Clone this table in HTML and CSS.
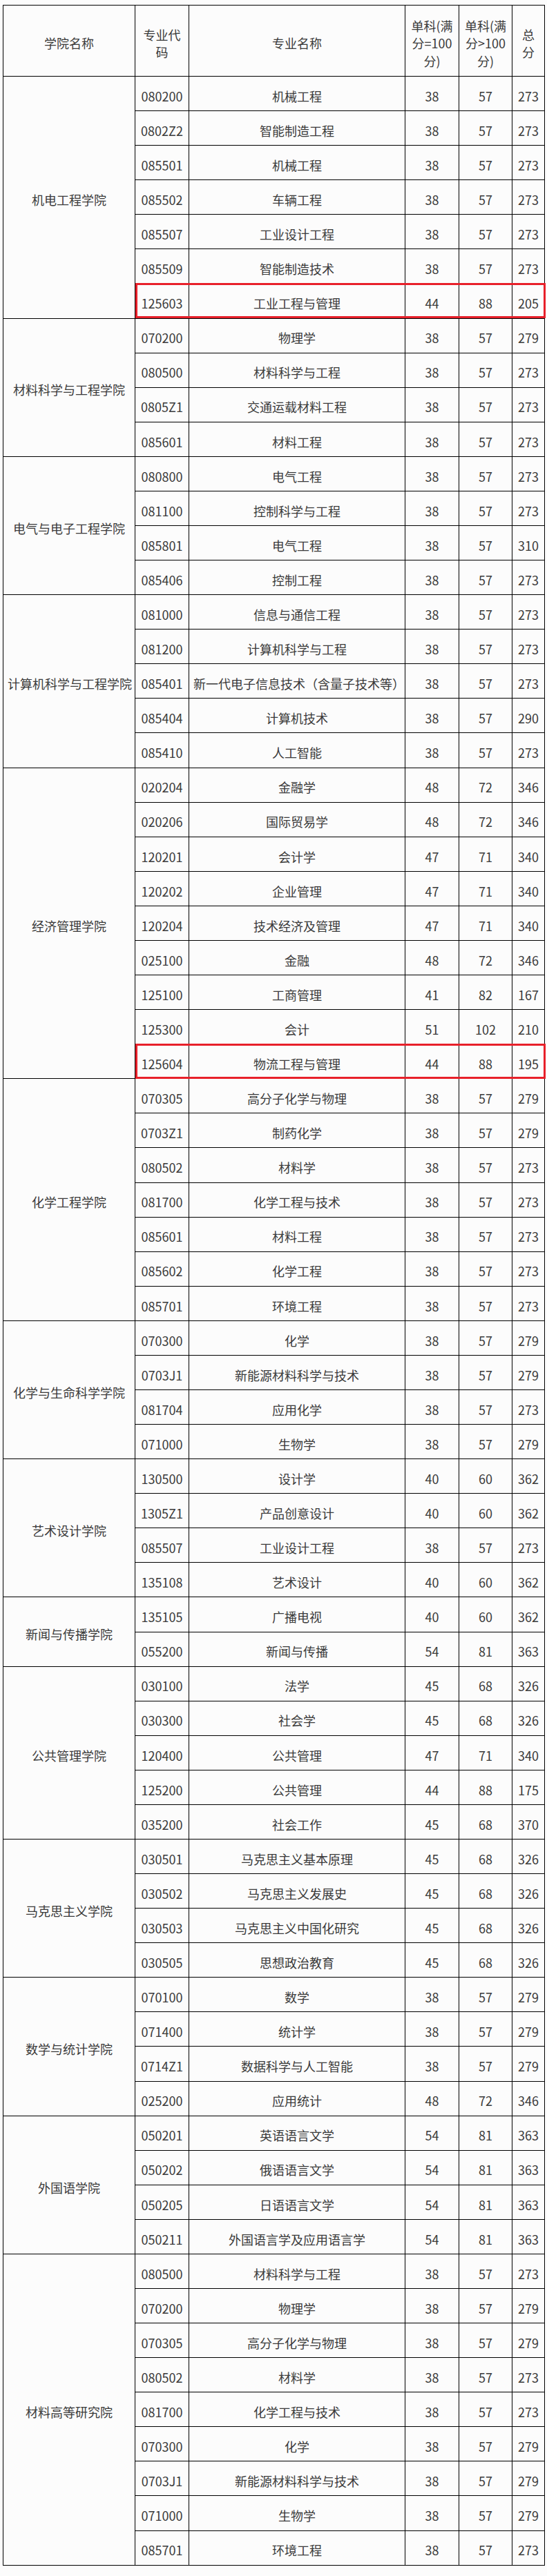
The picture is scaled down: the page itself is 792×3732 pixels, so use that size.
FILE: index.html
```html
<!DOCTYPE html>
<html lang="zh-CN">
<head>
<meta charset="utf-8">
<title>分数线</title>
<link rel="stylesheet" href="styles.css">
</head>
<body>
<div class="page">
<table class="score">
<colgroup>
<col class="c-school"><col class="c-code"><col class="c-name"><col class="c-s1"><col class="c-s2"><col class="c-total">
</colgroup>
<thead>
<tr class="head"><th>学院名称</th><th>专业代码</th><th>专业名称</th><th>单科(满分=100分)</th><th>单科(满分&gt;100分)</th><th>总分</th></tr>
</thead>
<tbody>
<tr><td class="school" rowspan="7">机电工程学院</td><td>080200</td><td>机械工程</td><td>38</td><td>57</td><td>273</td></tr>
<tr><td>0802Z2</td><td>智能制造工程</td><td>38</td><td>57</td><td>273</td></tr>
<tr><td>085501</td><td>机械工程</td><td>38</td><td>57</td><td>273</td></tr>
<tr><td>085502</td><td>车辆工程</td><td>38</td><td>57</td><td>273</td></tr>
<tr><td>085507</td><td>工业设计工程</td><td>38</td><td>57</td><td>273</td></tr>
<tr><td>085509</td><td>智能制造技术</td><td>38</td><td>57</td><td>273</td></tr>
<tr><td class="hl">125603<span class="hl-box"></span></td><td>工业工程与管理</td><td>44</td><td>88</td><td>205</td></tr>

<tr><td class="school" rowspan="4">材料科学与工程学院</td><td>070200</td><td>物理学</td><td>38</td><td>57</td><td>279</td></tr>
<tr><td>080500</td><td>材料科学与工程</td><td>38</td><td>57</td><td>273</td></tr>
<tr><td>0805Z1</td><td>交通运载材料工程</td><td>38</td><td>57</td><td>273</td></tr>
<tr><td>085601</td><td>材料工程</td><td>38</td><td>57</td><td>273</td></tr>

<tr><td class="school" rowspan="4">电气与电子工程学院</td><td>080800</td><td>电气工程</td><td>38</td><td>57</td><td>273</td></tr>
<tr><td>081100</td><td>控制科学与工程</td><td>38</td><td>57</td><td>273</td></tr>
<tr><td>085801</td><td>电气工程</td><td>38</td><td>57</td><td>310</td></tr>
<tr><td>085406</td><td>控制工程</td><td>38</td><td>57</td><td>273</td></tr>

<tr><td class="school" rowspan="5">计算机科学与工程学院</td><td>081000</td><td>信息与通信工程</td><td>38</td><td>57</td><td>273</td></tr>
<tr><td>081200</td><td>计算机科学与工程</td><td>38</td><td>57</td><td>273</td></tr>
<tr><td>085401</td><td>新一代电子信息技术（含量子技术等）</td><td>38</td><td>57</td><td>273</td></tr>
<tr><td>085404</td><td>计算机技术</td><td>38</td><td>57</td><td>290</td></tr>
<tr><td>085410</td><td>人工智能</td><td>38</td><td>57</td><td>273</td></tr>

<tr><td class="school" rowspan="9">经济管理学院</td><td>020204</td><td>金融学</td><td>48</td><td>72</td><td>346</td></tr>
<tr><td>020206</td><td>国际贸易学</td><td>48</td><td>72</td><td>346</td></tr>
<tr><td>120201</td><td>会计学</td><td>47</td><td>71</td><td>340</td></tr>
<tr><td>120202</td><td>企业管理</td><td>47</td><td>71</td><td>340</td></tr>
<tr><td>120204</td><td>技术经济及管理</td><td>47</td><td>71</td><td>340</td></tr>
<tr><td>025100</td><td>金融</td><td>48</td><td>72</td><td>346</td></tr>
<tr><td>125100</td><td>工商管理</td><td>41</td><td>82</td><td>167</td></tr>
<tr><td>125300</td><td>会计</td><td>51</td><td>102</td><td>210</td></tr>
<tr><td class="hl">125604<span class="hl-box"></span></td><td>物流工程与管理</td><td>44</td><td>88</td><td>195</td></tr>

<tr><td class="school" rowspan="7">化学工程学院</td><td>070305</td><td>高分子化学与物理</td><td>38</td><td>57</td><td>279</td></tr>
<tr><td>0703Z1</td><td>制药化学</td><td>38</td><td>57</td><td>279</td></tr>
<tr><td>080502</td><td>材料学</td><td>38</td><td>57</td><td>273</td></tr>
<tr><td>081700</td><td>化学工程与技术</td><td>38</td><td>57</td><td>273</td></tr>
<tr><td>085601</td><td>材料工程</td><td>38</td><td>57</td><td>273</td></tr>
<tr><td>085602</td><td>化学工程</td><td>38</td><td>57</td><td>273</td></tr>
<tr><td>085701</td><td>环境工程</td><td>38</td><td>57</td><td>273</td></tr>

<tr><td class="school" rowspan="4">化学与生命科学学院</td><td>070300</td><td>化学</td><td>38</td><td>57</td><td>279</td></tr>
<tr><td>0703J1</td><td>新能源材料科学与技术</td><td>38</td><td>57</td><td>279</td></tr>
<tr><td>081704</td><td>应用化学</td><td>38</td><td>57</td><td>273</td></tr>
<tr><td>071000</td><td>生物学</td><td>38</td><td>57</td><td>279</td></tr>

<tr><td class="school" rowspan="4">艺术设计学院</td><td>130500</td><td>设计学</td><td>40</td><td>60</td><td>362</td></tr>
<tr><td>1305Z1</td><td>产品创意设计</td><td>40</td><td>60</td><td>362</td></tr>
<tr><td>085507</td><td>工业设计工程</td><td>38</td><td>57</td><td>273</td></tr>
<tr><td>135108</td><td>艺术设计</td><td>40</td><td>60</td><td>362</td></tr>

<tr><td class="school" rowspan="2">新闻与传播学院</td><td>135105</td><td>广播电视</td><td>40</td><td>60</td><td>362</td></tr>
<tr><td>055200</td><td>新闻与传播</td><td>54</td><td>81</td><td>363</td></tr>

<tr><td class="school" rowspan="5">公共管理学院</td><td>030100</td><td>法学</td><td>45</td><td>68</td><td>326</td></tr>
<tr><td>030300</td><td>社会学</td><td>45</td><td>68</td><td>326</td></tr>
<tr><td>120400</td><td>公共管理</td><td>47</td><td>71</td><td>340</td></tr>
<tr><td>125200</td><td>公共管理</td><td>44</td><td>88</td><td>175</td></tr>
<tr><td>035200</td><td>社会工作</td><td>45</td><td>68</td><td>370</td></tr>

<tr><td class="school" rowspan="4">马克思主义学院</td><td>030501</td><td>马克思主义基本原理</td><td>45</td><td>68</td><td>326</td></tr>
<tr><td>030502</td><td>马克思主义发展史</td><td>45</td><td>68</td><td>326</td></tr>
<tr><td>030503</td><td>马克思主义中国化研究</td><td>45</td><td>68</td><td>326</td></tr>
<tr><td>030505</td><td>思想政治教育</td><td>45</td><td>68</td><td>326</td></tr>

<tr><td class="school" rowspan="4">数学与统计学院</td><td>070100</td><td>数学</td><td>38</td><td>57</td><td>279</td></tr>
<tr><td>071400</td><td>统计学</td><td>38</td><td>57</td><td>279</td></tr>
<tr><td>0714Z1</td><td>数据科学与人工智能</td><td>38</td><td>57</td><td>279</td></tr>
<tr><td>025200</td><td>应用统计</td><td>48</td><td>72</td><td>346</td></tr>

<tr><td class="school" rowspan="4">外国语学院</td><td>050201</td><td>英语语言文学</td><td>54</td><td>81</td><td>363</td></tr>
<tr><td>050202</td><td>俄语语言文学</td><td>54</td><td>81</td><td>363</td></tr>
<tr><td>050205</td><td>日语语言文学</td><td>54</td><td>81</td><td>363</td></tr>
<tr><td>050211</td><td>外国语言学及应用语言学</td><td>54</td><td>81</td><td>363</td></tr>

<tr><td class="school" rowspan="9">材料高等研究院</td><td>080500</td><td>材料科学与工程</td><td>38</td><td>57</td><td>273</td></tr>
<tr><td>070200</td><td>物理学</td><td>38</td><td>57</td><td>279</td></tr>
<tr><td>070305</td><td>高分子化学与物理</td><td>38</td><td>57</td><td>279</td></tr>
<tr><td>080502</td><td>材料学</td><td>38</td><td>57</td><td>273</td></tr>
<tr><td>081700</td><td>化学工程与技术</td><td>38</td><td>57</td><td>273</td></tr>
<tr><td>070300</td><td>化学</td><td>38</td><td>57</td><td>279</td></tr>
<tr><td>0703J1</td><td>新能源材料科学与技术</td><td>38</td><td>57</td><td>279</td></tr>
<tr><td>071000</td><td>生物学</td><td>38</td><td>57</td><td>279</td></tr>
<tr><td>085701</td><td>环境工程</td><td>38</td><td>57</td><td>273</td></tr>
</tbody>
</table>
</div>
</body>
</html>
```

FILE: styles.css
```css
html, body {
  margin: 0;
  padding: 0;
  background: #fcfcfc;
}

.page {
  padding: 7px 0 0 4px;
}

.score {
  border-collapse: collapse;
  table-layout: fixed;
  width: 784px;
  font-family: "Noto Sans CJK SC", "Noto Sans", sans-serif;
  font-size: 18px;
  line-height: 25.5px;
  color: #3a3a3a;
}

.c-school { width: 191px; }
.c-code { width: 78px; }
.c-name { width: 313px; }
.c-s1 { width: 78px; }
.c-s2 { width: 77px; }
.c-total { width: 47px; }

.score th,
.score td {
  border: 1px solid #000;
  text-align: center;
  vertical-align: middle;
  padding: 8px 6px 0 6px;
  font-weight: normal;
}

.score tr.head {
  height: 103px;
}

.score tbody tr {
  height: 50.08px;
}

.score td {
  white-space: nowrap;
}

.score td.hl {
  position: relative;
}

.hl-box {
  position: absolute;
  left: 0;
  top: -1px;
  width: 594px;
  height: 51px;
  box-sizing: border-box;
  border: 3px solid #e8202a;
  pointer-events: none;
}
```
